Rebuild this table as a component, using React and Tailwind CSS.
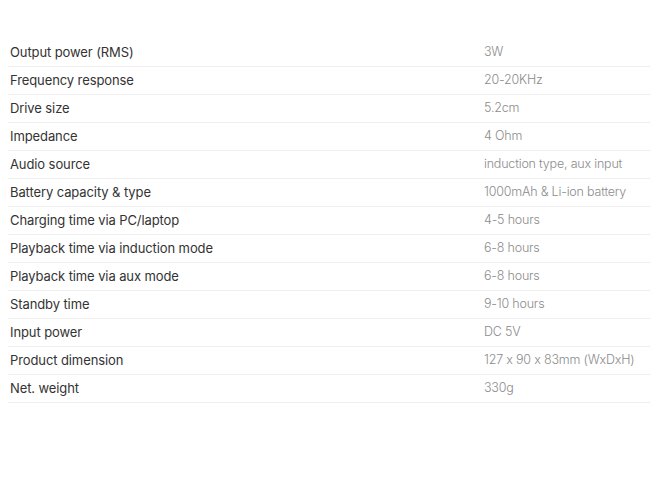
const specs = [
  ["Output power (RMS)", "3W"],
  ["Frequency response", "20-20KHz"],
  ["Drive size", "5.2cm"],
  ["Impedance", "4 Ohm"],
  ["Audio source", "induction type, aux input"],
  ["Battery capacity & type", "1000mAh & Li-ion battery"],
  ["Charging time via PC/laptop", "4-5 hours"],
  ["Playback time via induction mode", "6-8 hours"],
  ["Playback time via aux mode", "6-8 hours"],
  ["Standby time", "9-10 hours"],
  ["Input power", "DC 5V"],
  ["Product dimension", "127 x 90 x 83mm (WxDxH)"],
  ["Net. weight", "330g"],
];

export default function App() {
  return (
    <div className="min-h-[478px] w-[650px] overflow-hidden bg-white pt-[39px] pl-2 font-['Inter',sans-serif] text-[13px] [font-feature-settings:'calt'_0]">
      {specs.map(([label, value]) => (
        <div key={label} className="grid h-[28px] grid-cols-[476px_1fr] items-center whitespace-nowrap border-b border-[#eeeeee]">
          <span className="pl-[2px] tracking-[-0.1px] text-[#333333]">{label}</span>
          <span className="text-[12.5px] font-light tracking-[-0.2px] text-[#8c8c8c]">{value}</span>
        </div>
      ))}
    </div>
  );
}
